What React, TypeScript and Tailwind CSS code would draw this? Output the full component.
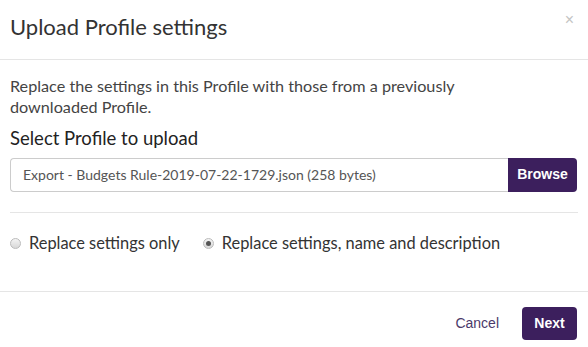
import React, { useState } from 'react';

const App: React.FC = () => {
  const [mode, setMode] = useState<'settings' | 'all'>('all');

  return (
    <div className="w-[588px] h-[347px] bg-white text-[#333] font-['Lato','Open_Sans',sans-serif] flex flex-col">
      {/* Header */}
      <div className="h-[60px] border-b border-[#e5e5e5] flex items-start justify-between pl-[10px] pr-[14px]">
        <h1 className="text-[22px] leading-none mt-[16px] text-[#333]">Upload Profile settings</h1>
        <button className="mt-[12px] text-[#c4c4c4] text-[16px] leading-none font-['Liberation_Sans',sans-serif]">×</button>
      </div>

      {/* Body */}
      <div className="px-[10px] pt-[15px]">
        <p className="text-[16.2px] leading-[21px] text-[#444] w-[480px]">
          Replace the settings in this Profile with those from a previously downloaded Profile.
        </p>
        <div className="text-[18.5px] leading-none mt-[12px] text-[#222]">Select Profile to upload</div>
        <div className="flex mt-[10px] h-[34px] w-[567px]">
          <div className="flex-1 border border-[#ccc] border-r-0 rounded-l-[4px] flex items-center pl-[12px] text-[14px] text-[#555]">
            Export - Budgets Rule-2019-07-22-1729.json (258 bytes)
          </div>
          <button className="w-[69px] bg-[#3c1f5d] rounded-r-[4px] text-white text-[14px] font-bold font-['Liberation_Sans',sans-serif]">
            Browse
          </button>
        </div>
        <div className="border-t border-[#e5e5e5] mt-[20px] w-[568px]" />
        <div className="flex items-center h-[62px] text-[16.4px] text-[#333]">
          <label className="flex items-center gap-[8px] cursor-pointer" onClick={() => setMode('settings')}>
            <span className="w-[11px] h-[11px] rounded-full border border-[#bbb] bg-gradient-to-b from-[#f4f4f4] to-[#d8d8d8] flex items-center justify-center">
              {mode === 'settings' && <span className="w-[5px] h-[5px] rounded-full bg-[#555]" />}
            </span>
            Replace settings only
          </label>
          <label className="flex items-center gap-[8px] ml-[23px] cursor-pointer" onClick={() => setMode('all')}>
            <span className="w-[11px] h-[11px] rounded-full border border-[#bbb] bg-gradient-to-b from-[#f4f4f4] to-[#d8d8d8] flex items-center justify-center">
              {mode === 'all' && <span className="w-[5px] h-[5px] rounded-full bg-[#555]" />}
            </span>
            Replace settings, name and description
          </label>
        </div>
      </div>

      {/* Footer */}
      <div className="mt-auto border-t border-[#e5e5e5] h-[56px] flex items-start justify-end pr-[11px] pt-[15px] gap-[23px]">
        <button className="h-[33px] text-[14px] text-[#4a3a6a] font-['Liberation_Sans',sans-serif]">Cancel</button>
        <button className="h-[33px] w-[55px] bg-[#3c1f5d] rounded-[4px] text-white text-[14px] font-bold font-['Liberation_Sans',sans-serif]">
          Next
        </button>
      </div>
    </div>
  );
};

export default App;
